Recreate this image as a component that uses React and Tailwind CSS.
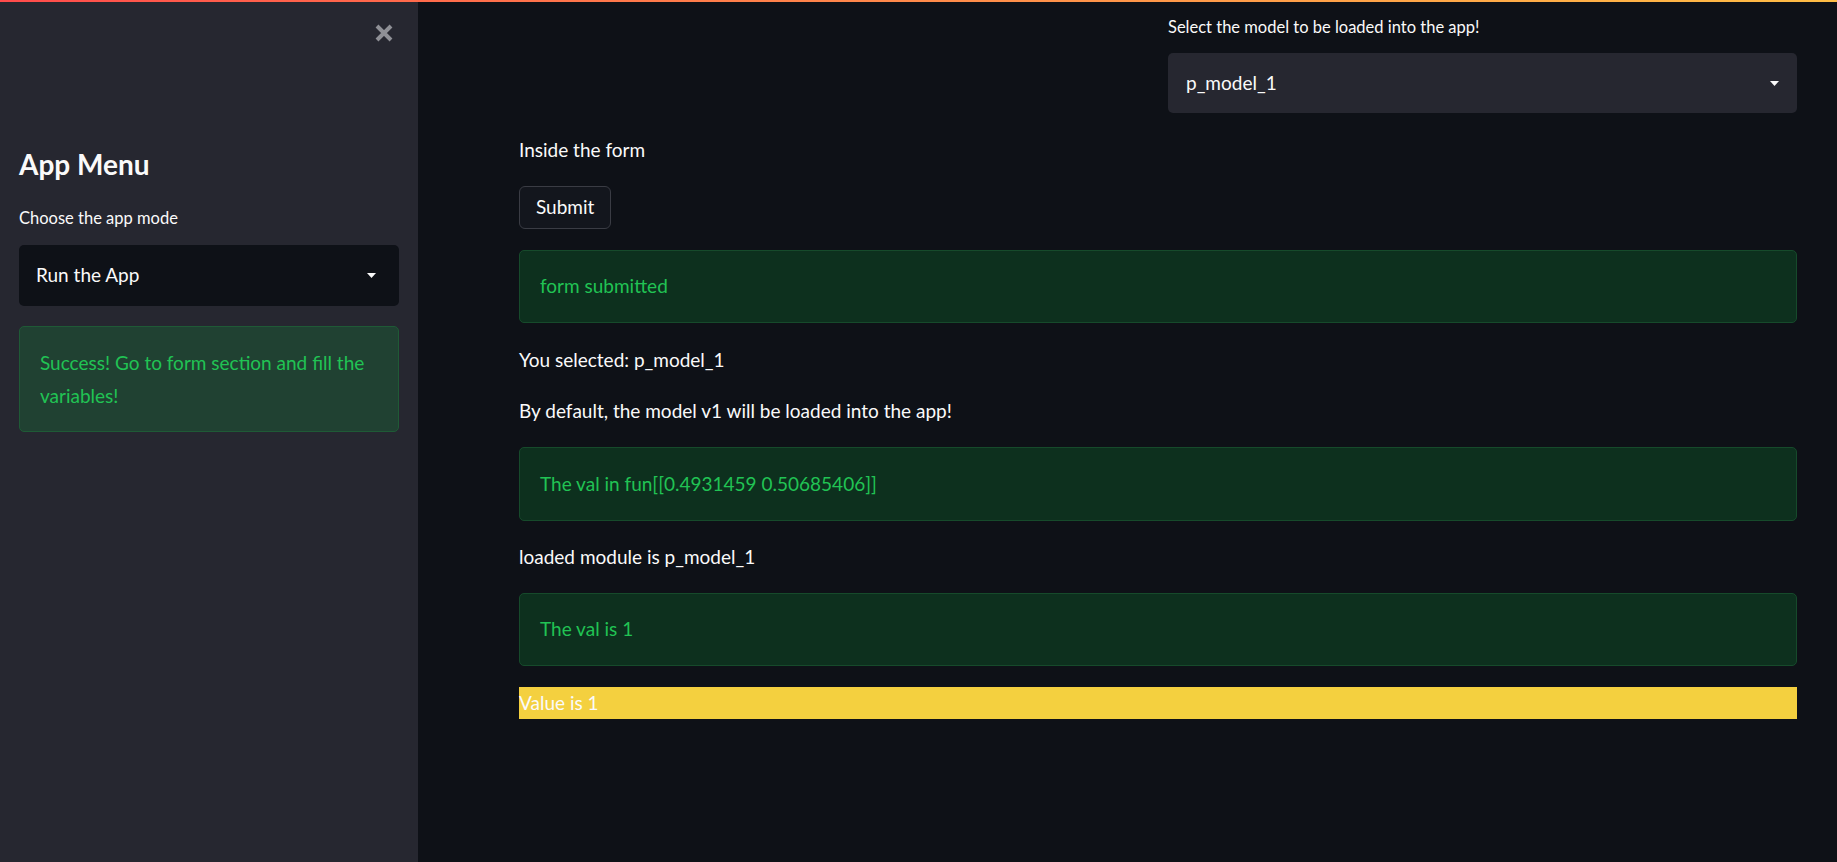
function Caret() {
  return (
    <svg width="9" height="5" viewBox="0 0 9 5" className="text-[#fafafa]">
      <path d="M0 0h9L4.5 5z" fill="currentColor" />
    </svg>
  );
}

function CloseIcon() {
  return (
    <svg width="20" height="20" viewBox="0 0 20 20">
      <path
        d="M3 3l14 14M17 3L3 17"
        stroke="#8f9096"
        strokeWidth="4"
        strokeLinecap="butt"
      />
    </svg>
  );
}

function Select({ value, dark }) {
  return (
    <div
      className={`flex items-center justify-between rounded-[5px] ${
        dark ? "bg-[#0e1117] h-[61px] pl-[17px] pr-[23px]" : "bg-[#262730] h-[60px] pl-[18px] pr-[18px]"
      }`}
    >
      <span className="text-[19px] text-[#fafafa]">{value}</span>
      <Caret />
    </div>
  );
}

function SuccessBox({ children, className = "" }) {
  return (
    <div
      className={`flex items-center rounded-[5px] border border-[#164a2b] bg-[#0d301e] pl-[20px] text-[19px] text-[#21c354] ${className}`}
    >
      {children}
    </div>
  );
}

function Line({ children, className = "" }) {
  return (
    <div className={`h-[32px] leading-[32px] text-[19px] text-[#fafafa] ${className}`}>
      {children}
    </div>
  );
}

export default function App() {
  return (
    <div
      className="relative flex min-h-[862px] h-screen bg-[#0e1117] text-[#fafafa]"
      style={{ fontFamily: "Lato, 'Noto Sans', sans-serif" }}
    >
      <div className="absolute left-0 right-0 top-0 h-[2px] bg-gradient-to-r from-[#ff4b4b] to-[#ffbd45]" />

      <aside className="w-[418px] shrink-0 bg-[#262730] px-[19px]">
        <div className="flex justify-end pt-[23px] pr-[5px]">
          <CloseIcon />
        </div>
        <h2 className="mt-[103px] h-[36px] leading-[36px] text-[28px] font-bold">
          App Menu
        </h2>
        <div className="mt-[24px] h-[24px] leading-[24px] text-[16.5px]">
          Choose the app mode
        </div>
        <div className="mt-[15px]">
          <Select value="Run the App" dark />
        </div>
        <div className="mt-[20px] rounded-[5px] border border-[#1f5a36] bg-[#204132] px-[20px] py-[19px] text-[19px] leading-[33px] text-[#21c354]">
          Success! Go to form section and fill the variables!
        </div>
      </aside>

      <main className="flex-1 pl-[101px] pr-[40px] pt-[15px]">
        <div className="grid grid-cols-2 gap-5">
          <div />
          <div>
            <div className="h-[24px] leading-[24px] text-[16.5px]">
              Select the model to be loaded into the app!
            </div>
            <div className="mt-[14px]">
              <Select value="p_model_1" />
            </div>
          </div>
        </div>

        <Line className="mt-[21px]">Inside the form</Line>

        <button className="mt-[20px] h-[43px] rounded-[6px] border border-[#3a3c44] bg-[#13161d] px-[16px] text-[19px] text-[#fafafa]">
          Submit
        </button>

        <SuccessBox className="mt-[21px] h-[73px]">form submitted</SuccessBox>

        <Line className="mt-[21px]">You selected: p_model_1</Line>
        <Line className="mt-[19px]">
          By default, the model v1 will be loaded into the app!
        </Line>

        <SuccessBox className="mt-[20px] h-[74px]">
          The val in fun[[0.4931459 0.50685406]]
        </SuccessBox>

        <Line className="mt-[20px]">loaded module is p_model_1</Line>

        <SuccessBox className="mt-[20px] h-[73px]">The val is 1</SuccessBox>

        <Line className="mt-[21px] bg-[#f4d03f]">Value is 1</Line>
      </main>
    </div>
  );
}
